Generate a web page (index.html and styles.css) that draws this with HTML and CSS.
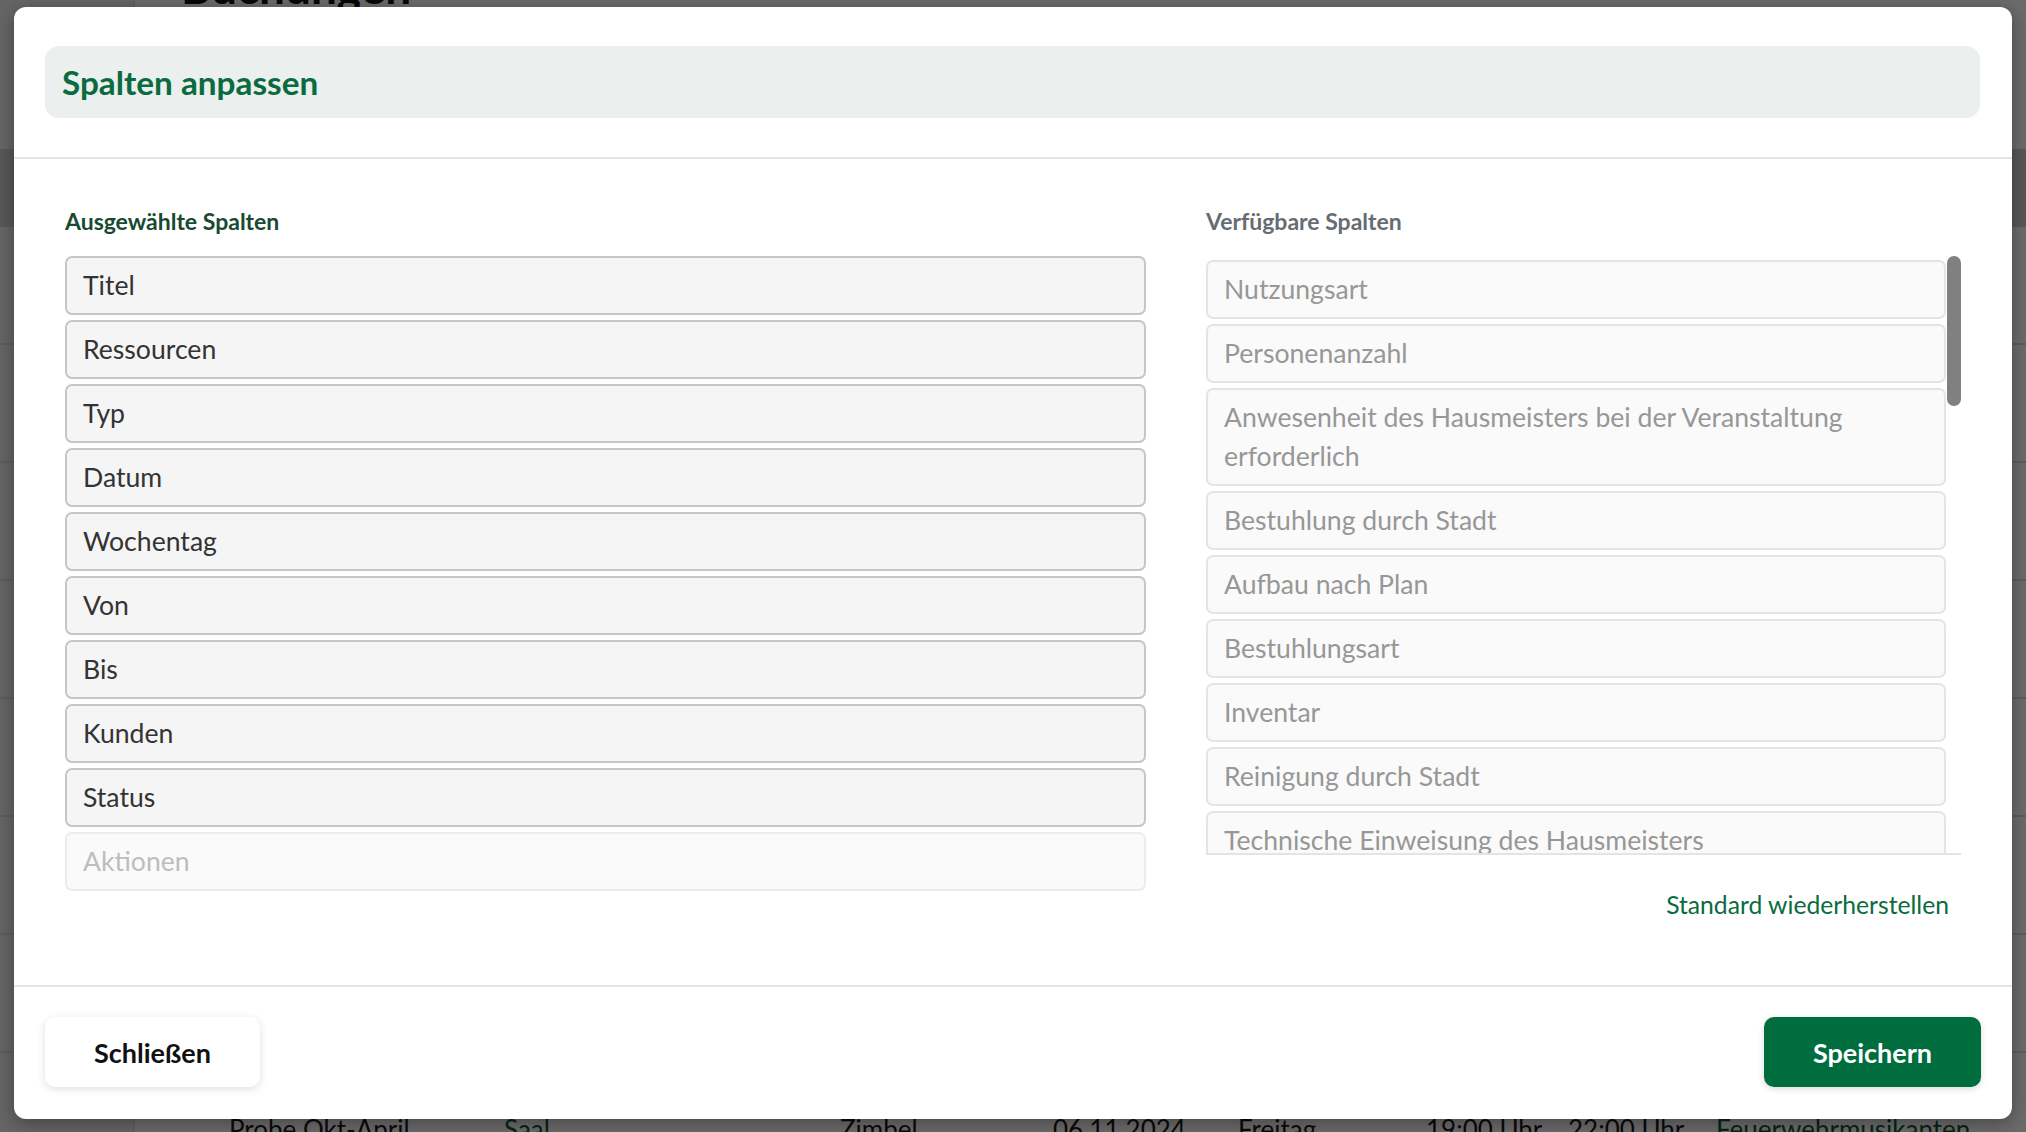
FILE: index.html
```html
<!DOCTYPE html>
<html lang="de">
<head>
<meta charset="utf-8">
<title>Spalten anpassen</title>
<link rel="stylesheet" href="styles.css">
</head>
<body>
<div class="page">
  <aside class="sidebar"></aside>
  <main class="content">
    <h1 class="page-title">Buchungen</h1>
    <div class="table">
      <div class="table-head"></div>
      <div class="table-row"></div>
      <div class="table-row"></div>
      <div class="table-row"></div>
      <div class="table-row"></div>
      <div class="table-row"></div>
      <div class="table-row"></div>
      <div class="table-row"></div>
      <div class="table-row last">
        <span class="c1">Probe Okt-April</span>
        <span class="c2 link">Saal</span>
        <span class="c3">Zimbel</span>
        <span class="c4">06.11.2024</span>
        <span class="c5">Freitag</span>
        <span class="c6">19:00 Uhr</span>
        <span class="c7">22:00 Uhr</span>
        <span class="c8 link">Feuerwehrmusikanten</span>
      </div>
    </div>
  </main>
</div>
<div class="backdrop"></div>

<div class="modal" role="dialog" aria-labelledby="modal-title">
  <header class="modal-header">
    <div class="title-bar">
      <h2 id="modal-title" class="modal-title">Spalten anpassen</h2>
    </div>
  </header>

  <section class="modal-body">
    <div class="column column-selected">
      <h3 class="column-label label-selected">Ausgewählte Spalten</h3>
      <ul class="col-list">
        <li class="col-item selected">Titel</li>
        <li class="col-item selected">Ressourcen</li>
        <li class="col-item selected">Typ</li>
        <li class="col-item selected">Datum</li>
        <li class="col-item selected">Wochentag</li>
        <li class="col-item selected">Von</li>
        <li class="col-item selected">Bis</li>
        <li class="col-item selected">Kunden</li>
        <li class="col-item selected">Status</li>
        <li class="col-item fixed">Aktionen</li>
      </ul>
    </div>

    <div class="column column-available">
      <h3 class="column-label label-available">Verfügbare Spalten</h3>
      <div class="scroll-box">
        <ul class="col-list available-list">
          <li class="col-item available">Nutzungsart</li>
          <li class="col-item available">Personenanzahl</li>
          <li class="col-item available">Anwesenheit des Hausmeisters bei der Veranstaltung erforderlich</li>
          <li class="col-item available">Bestuhlung durch Stadt</li>
          <li class="col-item available">Aufbau nach Plan</li>
          <li class="col-item available">Bestuhlungsart</li>
          <li class="col-item available">Inventar</li>
          <li class="col-item available">Reinigung durch Stadt</li>
          <li class="col-item available">Technische Einweisung des Hausmeisters</li>
          <li class="col-item available">Bemerkungen</li>
        </ul>
        <div class="scroll-track"><div class="scroll-thumb"></div></div>
      </div>
      <div class="reset-row">
        <a class="reset-link" href="#">Standard wiederherstellen</a>
      </div>
    </div>
  </section>

  <footer class="modal-footer">
    <button class="btn btn-close" type="button">Schließen</button>
    <button class="btn btn-save" type="button">Speichern</button>
  </footer>
</div>
</body>
</html>
```

FILE: styles.css
```css
* {
  box-sizing: border-box;
}

html, body {
  margin: 0;
  padding: 0;
  height: 100%;
}

body {
  font-family: "Lato", "Noto Sans", "Liberation Sans", sans-serif;
  background: #ffffff;
  overflow: hidden;
  position: relative;
}

/* ---------- page behind the dialog ---------- */
.page {
  display: flex;
  height: 1132px;
  background: #ffffff;
}

.sidebar {
  width: 135px;
  flex: none;
  background: #f1f1f1;
  border-right: 2px solid #e2e2e2;
}

.content {
  flex: 1;
  display: flex;
  flex-direction: column;
  padding-left: 46px;
}

.page-title {
  margin: -41px 0 0 0;
  height: 56px;
  font-size: 46px;
  line-height: 56px;
  font-weight: 700;
  color: #111;
}

.table {
  margin-top: 134px;
  display: flex;
  flex-direction: column;
  margin-left: -181px;
}

.table-head {
  height: 78px;
  background: #d2d2d2;
}

.table-row {
  height: 118px;
  border-bottom: 2px solid #dddddd;
}

.table-row.last {
  display: flex;
  align-items: flex-start;
  padding-top: 60px;
  font-size: 26px;
  line-height: 32px;
  color: #1a1a1a;
  border-bottom: none;
}

.table-row .link {
  color: #0b5a35;
}

.c1 { margin-left: 229px; width: 275px; }
.c2 { width: 336px; }
.c3 { width: 213px; }
.c4 { width: 185px; }
.c5 { width: 188px; }
.c6 { width: 142px; }
.c7 { width: 148px; }

.backdrop {
  position: absolute;
  inset: 0;
  background: rgba(0, 0, 0, 0.58);
}

/* ---------- dialog ---------- */
.modal {
  position: absolute;
  left: 14px;
  top: 7px;
  width: 1998px;
  background: #ffffff;
  border-radius: 12px;
  box-shadow: 0 4px 18px rgba(0, 0, 0, 0.35);
  display: flex;
  flex-direction: column;
}

.modal-header {
  padding: 39px 32px 39px 31px;
  border-bottom: 2px solid #e5e5e5;
}

.title-bar {
  height: 72px;
  background: #ebefee;
  border-radius: 14px;
  display: flex;
  align-items: center;
  padding: 0 17px;
}

.modal-title {
  margin: 0;
  font-size: 33.3px;
  font-weight: 700;
  color: #0a6b3e;
}

.modal-body {
  display: grid;
  grid-template-columns: 1081fr 755fr;
  column-gap: 60px;
  padding: 46px 51px 62px 51px;
  border-bottom: 2px solid #e5e5e5;
}

.column {
  display: flex;
  flex-direction: column;
  min-width: 0;
}

.column-label {
  margin: 0 0 18px 0;
  font-size: 23px;
  line-height: 33px;
  font-weight: 700;
}

.label-selected {
  color: #174a31;
}

.label-available {
  color: #676c71;
}

.col-list {
  list-style: none;
  margin: 0;
  padding: 0;
  display: flex;
  flex-direction: column;
  gap: 5px;
}

.col-item {
  font-size: 26.6px;
  line-height: 39px;
  padding: 8px 16px;
  border: 2px solid #c6c6c6;
  border-radius: 7px;
  background: #f5f5f5;
  color: #333333;
}

.col-item.fixed {
  border-color: #ececec;
  background: #fafafa;
  color: #bdbdbd;
}

.col-item.available {
  border-color: #e4e4e4;
  background: #fafafa;
  color: #979797;
}

.scroll-box {
  height: 599px;
  display: flex;
  align-items: flex-start;
  overflow: hidden;
  border-bottom: 2px solid #e4e4e4;
}

.available-list {
  flex: 1;
  min-width: 0;
  padding-top: 4px;
}

.scroll-track {
  width: 14px;
  flex: none;
  margin-left: 1px;
  align-self: stretch;
}

.scroll-thumb {
  height: 150px;
  background: #808080;
  border-radius: 7px;
}

.reset-row {
  display: flex;
  justify-content: flex-end;
  margin-top: 31px;
  padding-right: 12px;
}

.reset-link {
  font-size: 24.7px;
  line-height: 37px;
  color: #0a6b3e;
  text-decoration: none;
}

.modal-footer {
  display: flex;
  justify-content: space-between;
  align-items: center;
  padding: 30px 31px 32px 31px;
}

.btn {
  height: 70px;
  border: none;
  border-radius: 10px;
  font-family: inherit;
  font-size: 27px;
  font-weight: 700;
  cursor: pointer;
}

.btn-close {
  width: 215px;
  background: #ffffff;
  color: #111111;
  box-shadow: 0 2px 8px rgba(0, 0, 0, 0.13);
}

.btn-save {
  width: 217px;
  background: #006d3f;
  color: #ffffff;
  box-shadow: 0 2px 6px rgba(0, 0, 0, 0.15);
}
```
